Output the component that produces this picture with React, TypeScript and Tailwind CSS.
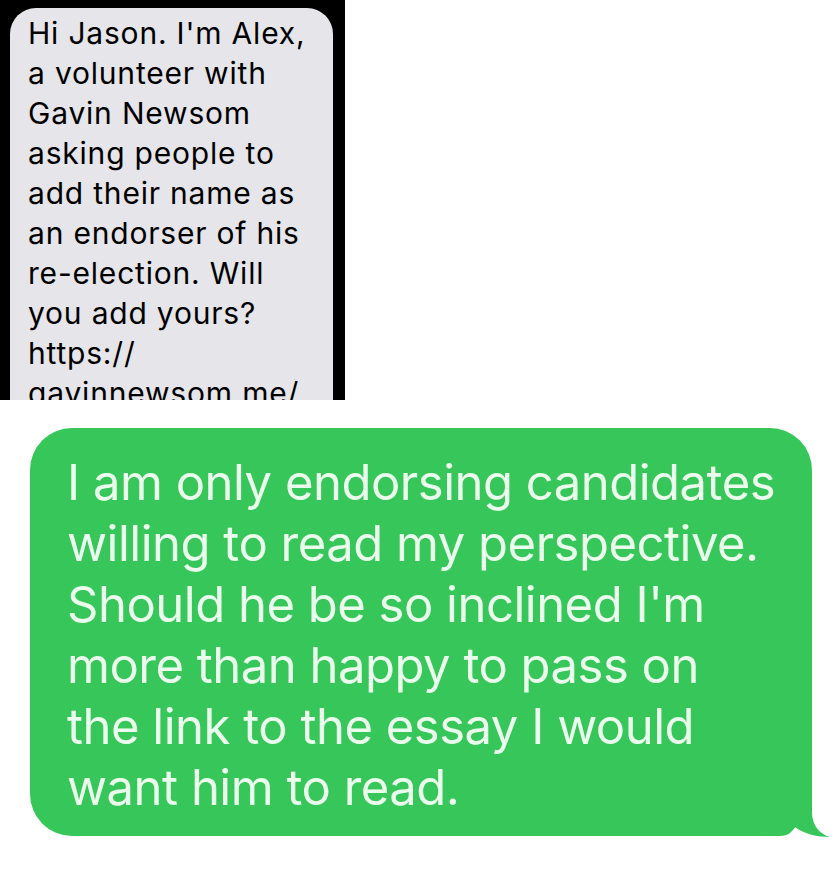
const incoming = [
  "Hi Jason. I'm Alex,",
  'a volunteer with',
  'Gavin Newsom',
  'asking people to',
  'add their name as',
  'an endorser of his',
  're-election. Will',
  'you add yours?',
  'https://',
  'gavinnewsom.me/',
]

const outgoing = [
  'I am only endorsing candidates',
  'willing to read my perspective.',
  "Should he be so inclined I'm",
  'more than happy to pass on',
  'the link to the essay I would',
  'want him to read.',
]

const App = () => {
  return (
    <div className="w-[835px] h-[878px] bg-white overflow-hidden">
      <div className="w-[345px] h-[400px] bg-black pl-[10px] pr-[12px] pt-[8px] overflow-hidden">
        <div className="h-full bg-[#e5e5ea] rounded-t-[26px] pl-[18px] pt-[5px] font-['Inter',sans-serif] text-[30px] leading-[40px] text-black tracking-[0.8px]">
          {incoming.map((line) => (
            <div key={line} className="whitespace-nowrap">{line}</div>
          ))}
        </div>
      </div>

      <div className="relative ml-[30px] mt-[28px] w-[782px] h-[408px]">
        <div className="h-full bg-[#37c65a] rounded-[42px] pl-[37px] pt-[24px] font-['Inter',sans-serif] font-normal text-[49px] leading-[61px] text-[#eafcec] tracking-[-0.5px]">
          {outgoing.map((line) => (
            <div key={line} className="whitespace-nowrap">{line}</div>
          ))}
        </div>
        {/* tail */}
        <svg className="absolute left-[740px] top-[362px]" width="61" height="48" viewBox="0 0 61 48">
          <path
            d="M0 46 L10 46 C18 46 22 42 25 37 C34 44 48 47 60 47 C50 44 42 36 42 22 L42 0 L0 0 Z"
            fill="#37c65a"
          />
        </svg>
      </div>
    </div>
  )
}

export default App
